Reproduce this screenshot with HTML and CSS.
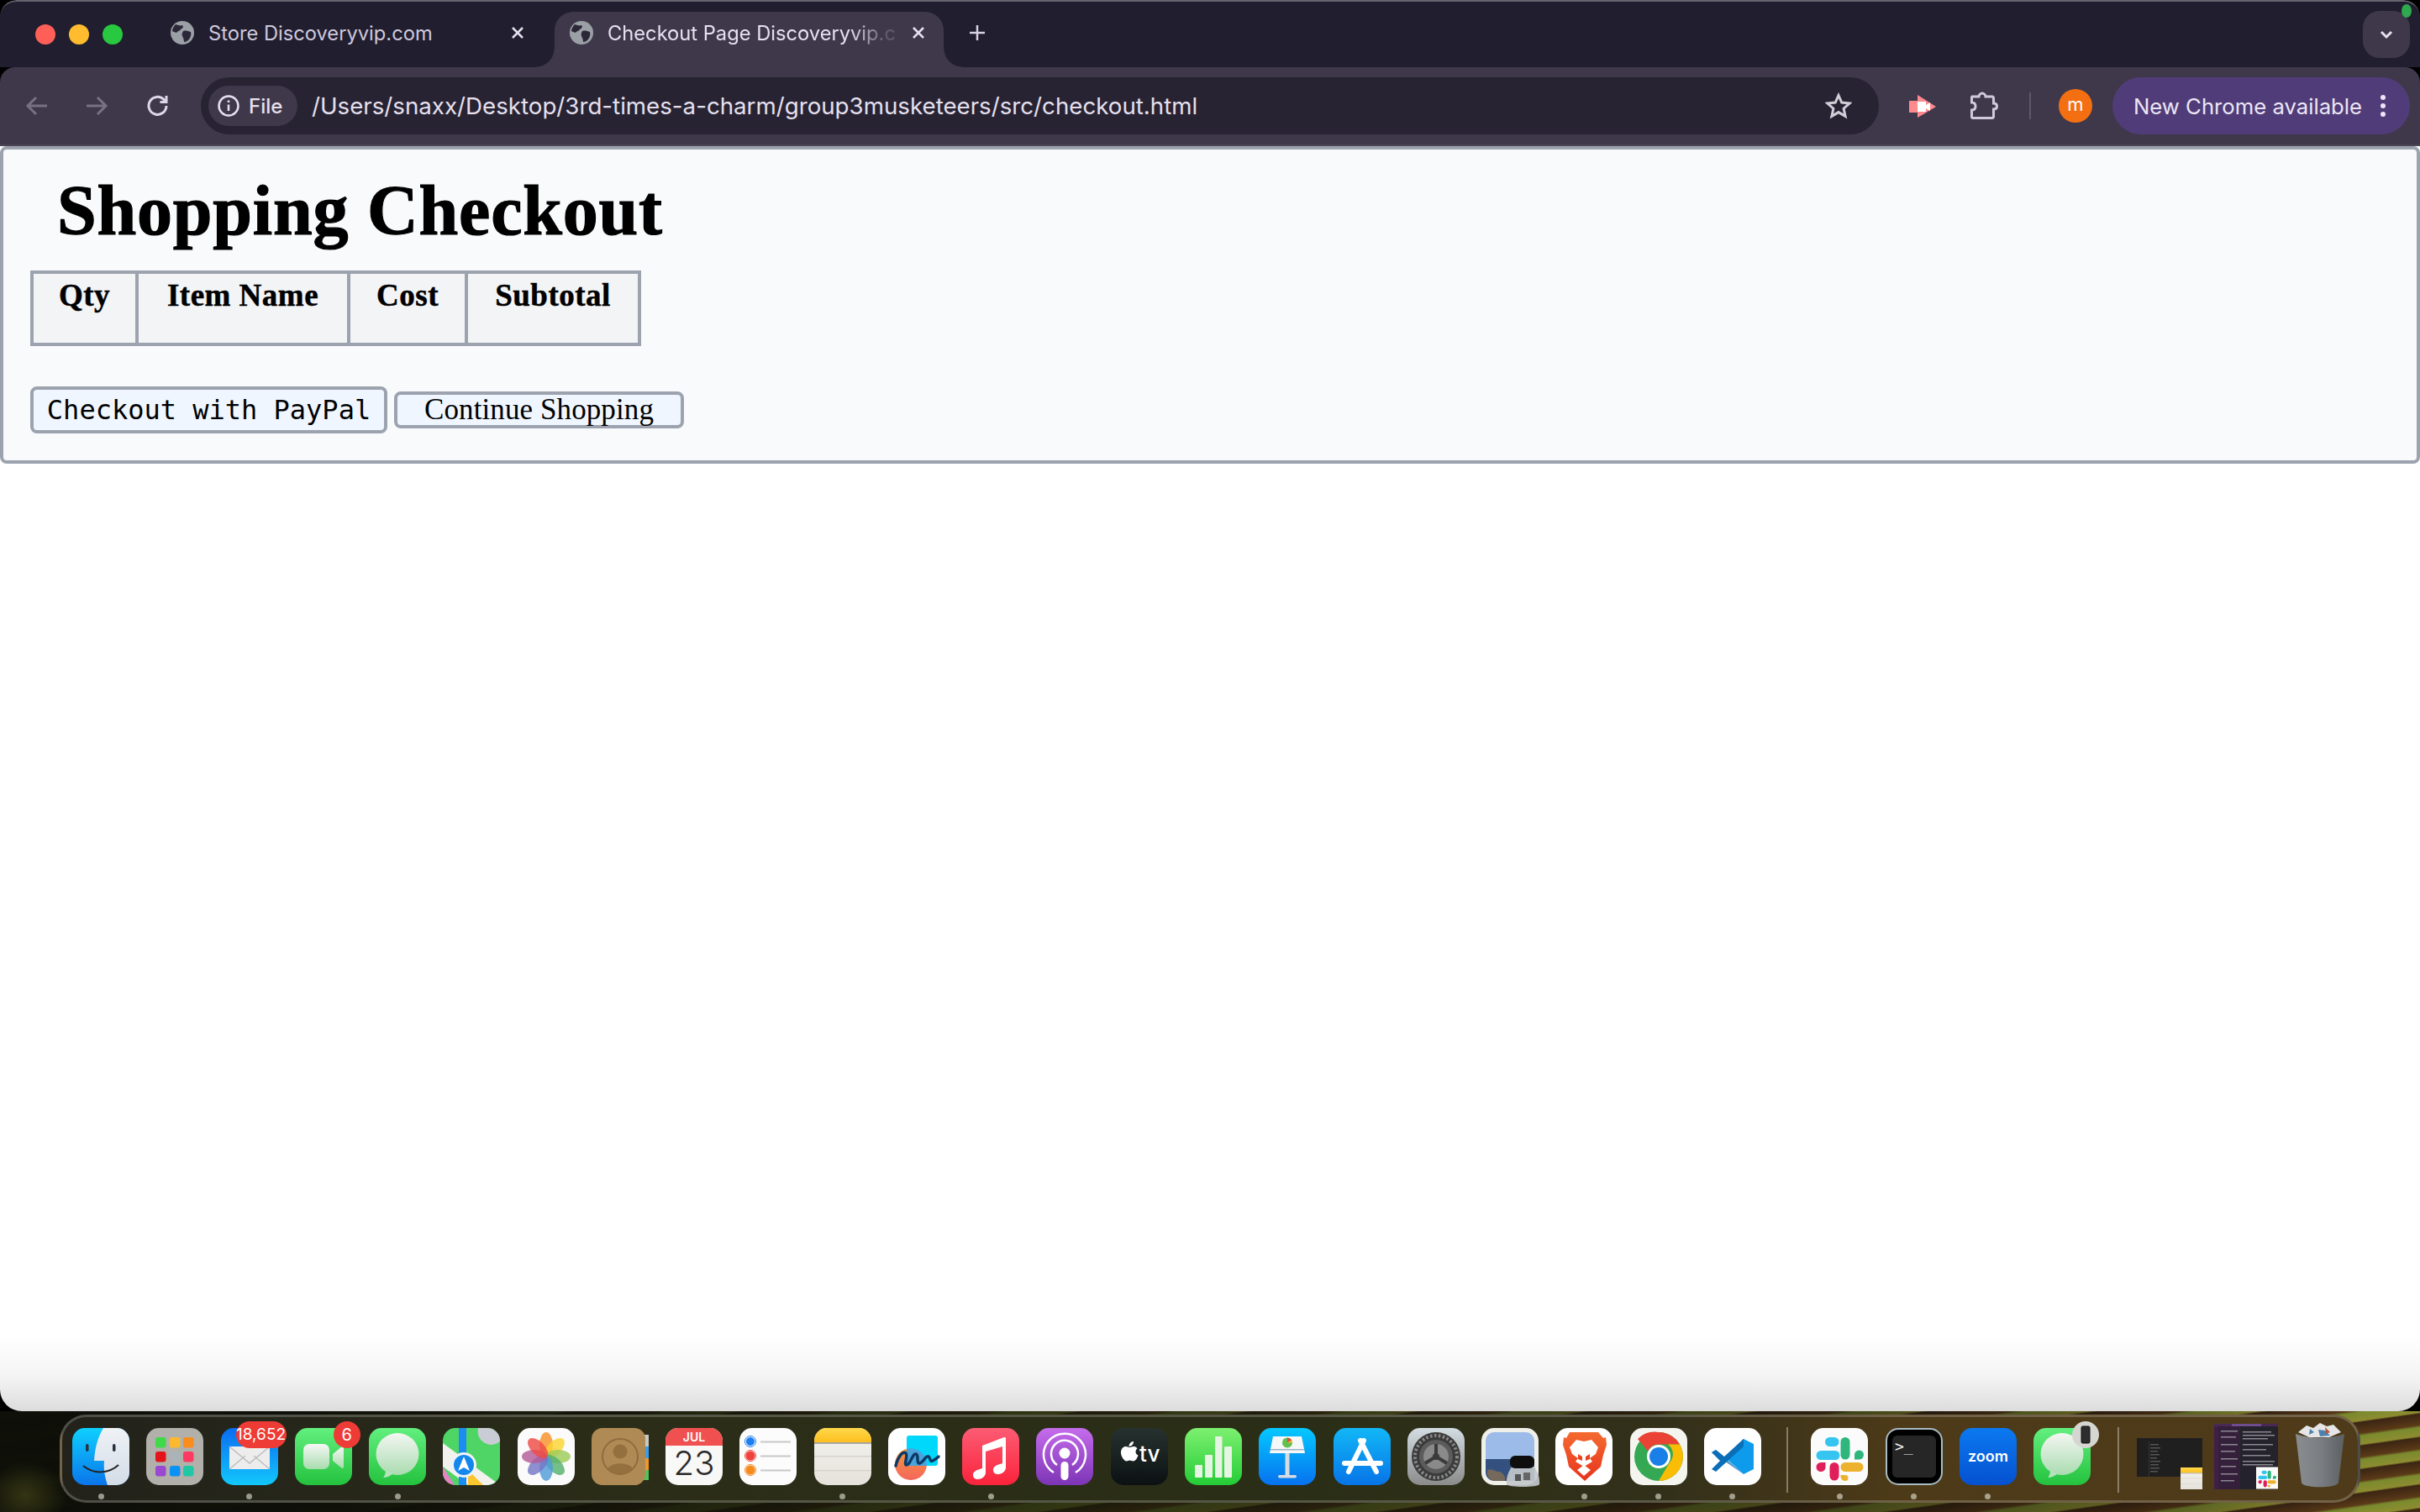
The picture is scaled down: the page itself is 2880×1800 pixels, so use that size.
FILE: index.html
```html
<!DOCTYPE html>
<html lang="en">
<head>
    <meta charset="UTF-8">
    <meta name="viewport" content="width=device-width, initial-scale=1.0">
    <title>Checkout Page</title>
    <link rel="stylesheet" href="styles.css">
</head>
<body>
    <!-- shared icons -->
    <svg class="defs" width="0" height="0">
        <defs>
            <symbol id="globe" viewBox="0 0 28 28">
                <circle cx="14" cy="14" r="14" fill="#9aa0a6"/>
                <path d="M6 4c3 1 6 2 8 1 2 2 0 4-2 5-1 2-4 2-5 4-2-1-4-1-5-2 0-3 2-6 4-8zM15 12c3-1 6 0 9 1 1 3 0 7-3 10-2 1-3 2-5 2 0-3-1-5-2-7-1-2 0-4 1-6z" fill="#2b2738"/>
            </symbol>
            <linearGradient id="msgBg" x1="0" y1="0" x2="0" y2="1"><stop offset="0" stop-color="#62ef7e"/><stop offset="1" stop-color="#24c23e"/></linearGradient>
            <linearGradient id="msgBubble" x1="0" y1="0" x2="0" y2="1"><stop offset="0" stop-color="#f4f6f2"/><stop offset="1" stop-color="#a9dcb0"/></linearGradient>
            <symbol id="messages" viewBox="0 0 68 68">
                <rect width="68" height="68" fill="url(#msgBg)"/>
                <ellipse cx="34" cy="31" rx="25.500" ry="25" fill="url(#msgBubble)"/>
                <path d="M20 50c0 5-2 8-3 9 4 0 9-2 12-5z" fill="#b5e2bb"/>
            </symbol>
            <symbol id="slack" viewBox="0 0 68 68">
                <rect width="68" height="68" fill="#fbfbfb"/>
                <path d="M28 11a5.500 5.500 0 0 1 0 11h-5.500a5.500 5.500 0 0 1 0-11z M29 27a5.500 5.500 0 0 1 0 11H12a5.500 5.500 0 0 1 0-11z" fill="#36c5f0"/>
                <path d="M41 11a5.500 5.500 0 0 1 5.500 5.500V32a5.500 5.500 0 0 1-11 0V16.500A5.500 5.500 0 0 1 41 11z M63 32a5.500 5.500 0 0 1-5.500 5.500H52V32a5.500 5.500 0 0 1 11 0z" fill="#2eb67d"/>
                <path d="M57 41a5.500 5.500 0 0 1 0 11H41a5.500 5.500 0 0 1 0-11z M41 63a5.500 5.500 0 0 1-5.500-5.500V56H41a3.500 3.500 0 0 1 0 7z" fill="#ecb22e"/>
                <path d="M12 52a5.500 5.500 0 0 1-5.500-5.500A5.500 5.500 0 0 1 12 41h5.500v5.500A5.500 5.500 0 0 1 12 52z M28 41a5.500 5.500 0 0 1 5.500 5.500V57a5.500 5.500 0 0 1-11 0V46.500A5.500 5.500 0 0 1 28 41z" fill="#e01e5a"/>
            </symbol>
            <linearGradient id="notesTop" x1="0" y1="0" x2="0" y2="1"><stop offset="0" stop-color="#ffd84a"/><stop offset="1" stop-color="#fcbf1f"/></linearGradient>
            <linearGradient id="notesBody" x1="0" y1="0" x2="0" y2="1"><stop offset="0" stop-color="#f4f3ee"/><stop offset="1" stop-color="#e5e2db"/></linearGradient>
            <symbol id="notes" viewBox="0 0 68 68">
                <rect width="68" height="68" fill="url(#notesBody)"/>
                <rect width="68" height="17" fill="url(#notesTop)"/>
                <rect y="17" width="68" height="2" fill="#a9a79f"/>
                <rect y="33" width="68" height="1.500" fill="#d5d3cc"/>
                <rect y="50" width="68" height="1.500" fill="#d5d3cc"/>
            </symbol>
        </defs>
    </svg>

    <div class="window">
        <div class="tabstrip">
            <div class="lights">
                <span class="light red"></span>
                <span class="light yellow"></span>
                <span class="light green"></span>
            </div>
            <div class="tab">
                <svg class="favicon"><use href="#globe"/></svg>
                <span class="tab-title">Store Discoveryvip.com</span>
                <svg class="tab-close" viewBox="0 0 20 20"><path d="M4 4l12 12M16 4L4 16"/></svg>
            </div>
            <div class="tab tab-active">
                <svg class="favicon"><use href="#globe"/></svg>
                <span class="tab-title tab-fade">Checkout Page Discoveryvip.c</span>
                <svg class="tab-close" viewBox="0 0 20 20"><path d="M4 4l12 12M16 4L4 16"/></svg>
            </div>
            <svg class="new-tab" viewBox="0 0 24 24"><path d="M12 3v18M3 12h18"/></svg>
            <div class="tab-search">
                <svg viewBox="0 0 20 20"><path d="M4 7l6 6 6-6"/></svg>
                <span class="update-dot"></span>
            </div>
        </div>

        <div class="toolbar">
            <svg class="nav-icon nav-off" viewBox="0 0 36 36"><path d="M30 18H7M17 8L7 18l10 10"/></svg>
            <svg class="nav-icon nav-off" viewBox="0 0 36 36"><path d="M6 18h23M19 8l10 10-10 10"/></svg>
            <svg class="nav-icon nav-reload" viewBox="0 0 36 36"><path d="M28 18a10.500 10.500 0 1 1-3-7.500l3 3M28 6v7.500h-7.500"/></svg>
            <div class="omnibox">
                <div class="site-chip">
                    <svg class="info-icon" viewBox="0 0 28 28">
                        <circle cx="14" cy="14" r="11.500"/>
                        <path d="M14 12.500V20M14 7.500v2.500"/>
                    </svg>
                    <span>File</span>
                </div>
                <span class="url">/Users/snaxx/Desktop/3rd-times-a-charm/group3musketeers/src/checkout.html</span>
                <svg class="star" viewBox="0 0 32 32"><path d="M16 3.500l3.800 8.600 9.300.9-7 6.200 2 9.200-8.100-4.800-8.100 4.800 2-9.200-7-6.200 9.300-.9z"/></svg>
            </div>
            <svg class="ext-video" viewBox="0 0 36 28">
                <rect x="2" y="8" width="12" height="14" fill="#ff8a8e"/>
                <path d="M12 1l22 14-22 13z" fill="#ff8a8e"/>
                <path d="M12 9h10v12H12zM22 13l5-3v10l-5-3z" fill="#fff"/>
            </svg>
            <svg class="ext-puzzle" viewBox="0 0 36 36"><path d="M4 7h8c0-2 2-4 4-4s4 2 4 4h8a1.500 1.500 0 0 1 1.500 1.500V15c2 0 4 1 4 3.500S31.500 22 29.500 22v9a1.500 1.500 0 0 1-1.500 1.500H5A1.500 1.500 0 0 1 3.500 31v-8c3 0 4.500-2 4.500-4.500S6.500 14 3.500 14V8.500A1.500 1.500 0 0 1 4 7z"/></svg>
            <span class="tool-sep"></span>
            <span class="avatar">m</span>
            <div class="update-chip">
                <span>New Chrome available</span>
                <svg class="chip-dots" viewBox="0 0 6 28"><circle cx="3" cy="4" r="3"/><circle cx="3" cy="14" r="3"/><circle cx="3" cy="24" r="3"/></svg>
            </div>
        </div>

        <div class="viewport">
            <div class="checkout">
                <h1>Shopping Checkout</h1>
                <table class="cart">
                    <thead>
                        <tr>
                            <th class="col-qty">Qty</th>
                            <th class="col-name">Item Name</th>
                            <th class="col-cost">Cost</th>
                            <th class="col-sub">Subtotal</th>
                        </tr>
                    </thead>
                </table>
                <div class="actions">
                    <button class="btn-paypal">Checkout with PayPal</button>
                    <button class="btn-continue">Continue Shopping</button>
                </div>
            </div>
        </div>
    </div>

    <div class="desktop">
        <div class="dock">
            <div class="app">
                <svg class="icon" viewBox="0 0 68 68">
                    <defs><linearGradient id="fin" x1="0" y1="0" x2="0" y2="1"><stop offset="0" stop-color="#0fd0ff"/><stop offset="1" stop-color="#0a75ea"/></linearGradient>
                    <linearGradient id="fin2" x1="0" y1="0" x2="0" y2="1"><stop offset="0" stop-color="#eff2f6"/><stop offset="1" stop-color="#d3dce7"/></linearGradient></defs>
                    <rect width="68" height="68" fill="url(#fin)"/>
                    <path d="M37 0c-7 12-10 24-11 39h12c-1 10 1 20 4 29h26V0z" fill="url(#fin2)"/>
                    <rect x="16" y="19" width="3.500" height="9" rx="1.700" fill="#27333f"/>
                    <rect x="48" y="19" width="3.500" height="9" rx="1.700" fill="#27333f"/>
                    <path d="M13 45c12 10 30 10 42-1" fill="none" stroke="#222" stroke-width="2"/>
                </svg>
                <span class="dot on"></span>
            </div>
            <div class="app">
                <svg class="icon" viewBox="0 0 68 68">
                    <rect width="68" height="68" fill="#b1b0ab"/>
                    <g>
                        <rect x="11" y="11" width="12.500" height="12.500" rx="3" fill="#3fd94a"/>
                        <rect x="28" y="11" width="12.500" height="12.500" rx="3" fill="#fdb92d"/>
                        <rect x="44" y="11" width="12.500" height="12.500" rx="3" fill="#f98c1b"/>
                        <rect x="11" y="28" width="12.500" height="12.500" rx="3" fill="#e3151a"/>
                        <rect x="28" y="28" width="12.500" height="12.500" rx="3" fill="#a9b3b8"/>
                        <rect x="44" y="28" width="12.500" height="12.500" rx="3" fill="#fb3b63"/>
                        <rect x="11" y="45" width="12.500" height="12.500" rx="3" fill="#9a48d0"/>
                        <rect x="28" y="45" width="12.500" height="12.500" rx="3" fill="#0a91f5"/>
                        <rect x="44" y="45" width="12.500" height="12.500" rx="3" fill="#1fc7a5"/>
                    </g>
                </svg>
                <span class="dot"></span>
            </div>
            <div class="app">
                <svg class="icon" viewBox="0 0 68 68">
                    <defs><linearGradient id="mail" x1="0" y1="0" x2="0" y2="1"><stop offset="0" stop-color="#0a6cf0"/><stop offset="1" stop-color="#12c8fc"/></linearGradient></defs>
                    <rect width="68" height="68" fill="url(#mail)"/>
                    <rect x="10" y="22" width="48" height="27" rx="2" fill="#ededed"/>
                    <path d="M10 49l19-16M58 49L39 33M10 22l24 20 24-20" fill="none" stroke="#bdbdbd" stroke-width="1.500"/>
                </svg>
                <span class="badge badge-mail">18,652</span>
                <span class="dot on"></span>
            </div>
            <div class="app">
                <svg class="icon" viewBox="0 0 68 68">
                    <defs><linearGradient id="ftg" x1="0" y1="0" x2="0" y2="1"><stop offset="0" stop-color="#f6f7f5"/><stop offset="1" stop-color="#a8dcae"/></linearGradient></defs>
                    <rect width="68" height="68" fill="url(#msgBg)"/>
                    <rect x="10" y="19" width="31" height="30" rx="7" fill="url(#ftg)"/>
                    <path d="M45 31l11-9c1 0 2 1 2 2v22c0 1-1 2-2 2l-11-9z" fill="url(#ftg)"/>
                </svg>
                <span class="badge badge-count">6</span>
                <span class="dot"></span>
            </div>
            <div class="app">
                <svg class="icon"><use href="#messages"/></svg>
                <span class="dot on"></span>
            </div>
            <div class="app">
                <svg class="icon" viewBox="0 0 68 68">
                    <rect width="68" height="68" fill="#4fd566"/>
                    <path d="M0 18L68 68H30L0 46z" fill="#f1f1ee"/>
                    <path d="M0 46l14 22H0z" fill="#e583c5"/>
                    <path d="M30 50l18 18H30z" fill="#fdc52e"/>
                    <rect x="19" width="9" height="68" fill="#1d8cf2"/>
                    <path d="M42 0a16 16 0 0 0 26 16V0z" fill="#c9ccd4"/>
                    <circle cx="25" cy="44" r="15" fill="#f0f3f7"/>
                    <circle cx="25" cy="44" r="12" fill="#1487ee"/>
                    <path d="M25 34l7 17-7-4-7 4z" fill="#fff"/>
                </svg>
                <span class="dot"></span>
            </div>
            <div class="app">
                <svg class="icon" viewBox="0 0 68 68">
                    <rect width="68" height="68" fill="#fbfbfb"/>
                    <g transform="translate(34 34)" fill-opacity=".82">
                        <ellipse cy="-14" rx="8" ry="15" fill="#f8912a"/>
                        <ellipse cy="-14" rx="8" ry="15" fill="#fbd332" transform="rotate(45)"/>
                        <ellipse cy="-14" rx="8" ry="15" fill="#9ccb57" transform="rotate(90)"/>
                        <ellipse cy="-14" rx="8" ry="15" fill="#55b06c" transform="rotate(135)"/>
                        <ellipse cy="-14" rx="8" ry="15" fill="#4f9bd8" transform="rotate(180)"/>
                        <ellipse cy="-14" rx="8" ry="15" fill="#7476c6" transform="rotate(225)"/>
                        <ellipse cy="-14" rx="8" ry="15" fill="#b35c9a" transform="rotate(270)"/>
                        <ellipse cy="-14" rx="8" ry="15" fill="#ee4a45" transform="rotate(315)"/>
                    </g>
                </svg>
                <span class="dot"></span>
            </div>
            <div class="app">
                <svg class="icon icon-square" viewBox="0 0 68 68">
                    <rect x="58" y="8" width="10" height="14" fill="#c9c8c2"/>
                    <rect x="58" y="22" width="10" height="14" fill="#3d9de9"/>
                    <rect x="58" y="36" width="10" height="14" fill="#f0962a"/>
                    <rect x="58" y="50" width="10" height="12" fill="#54c15c"/>
                    <rect width="64" height="68" rx="13" fill="#b08a55"/>
                    <circle cx="34" cy="34" r="21" fill="none" stroke="#8e6c3f" stroke-width="2"/>
                    <circle cx="34" cy="28" r="8.500" fill="#94703f"/>
                    <path d="M19 49c3-9 27-9 30 0-8 8-22 8-30 0z" fill="#94703f"/>
                </svg>
                <span class="dot"></span>
            </div>
            <div class="app">
                <svg class="icon" viewBox="0 0 68 68">
                    <rect width="68" height="68" fill="#f8f8f6"/>
                    <rect width="68" height="21" fill="#f0504f"/>
                    <text x="34" y="16" class="cal-month">JUL</text>
                    <text x="34" y="56" class="cal-day">23</text>
                </svg>
                <span class="dot"></span>
            </div>
            <div class="app">
                <svg class="icon" viewBox="0 0 68 68">
                    <rect width="68" height="68" fill="#fcfcfc"/>
                    <circle cx="13" cy="16" r="5.500" fill="#1c7ff0" stroke="#fcfcfc"/><circle cx="13" cy="16" r="6.500" fill="none" stroke="#1c7ff0"/>
                    <circle cx="13" cy="33" r="5.500" fill="#f0423c"/><circle cx="13" cy="33" r="6.500" fill="none" stroke="#f0423c"/>
                    <circle cx="13" cy="50" r="5.500" fill="#f58a1f"/><circle cx="13" cy="50" r="6.500" fill="none" stroke="#f58a1f"/>
                    <path d="M25 16.500h36M25 33.500h36M25 50.500h36" stroke="#c8c8c8" stroke-width="2"/>
                </svg>
                <span class="dot"></span>
            </div>
            <div class="app">
                <svg class="icon"><use href="#notes"/></svg>
                <span class="dot on"></span>
            </div>
            <div class="app">
                <svg class="icon" viewBox="0 0 68 68">
                    <defs><linearGradient id="ff" x1="0" y1="0" x2="0" y2="1"><stop offset="0" stop-color="#f59a3c"/><stop offset="1" stop-color="#f4665c"/></linearGradient></defs>
                    <rect width="68" height="68" fill="#fff"/>
                    <circle cx="27" cy="43" r="19" fill="url(#ff)"/>
                    <rect x="22" y="9" width="37" height="36" rx="3" fill="#00d8fb"/>
                    <path d="M22 25a19 19 0 0 1 24 20H25a3 3 0 0 1-3-3z" fill="#4ba3dc"/>
                    <path d="M9 45c3-12 9-18 12-15 3 3-3 14 1 14s7-14 11-13 0 11 4 11 8-10 11-8 1 7 5 5 5-3 7-5" fill="none" stroke="#0c3a66" stroke-width="3.500" stroke-linecap="round"/>
                </svg>
                <span class="dot"></span>
            </div>
            <div class="app">
                <svg class="icon" viewBox="0 0 68 68">
                    <defs><linearGradient id="mus" x1="0" y1="0" x2="0" y2="1"><stop offset="0" stop-color="#fc5c74"/><stop offset="1" stop-color="#fa233b"/></linearGradient></defs>
                    <rect width="68" height="68" fill="url(#mus)"/>
                    <path d="M24 21l26-10c1 0 2 0 2 2v34c0 4-4 8-9 8-4 0-6-2-6-5 0-4 4-6 8-7l3-1V22l-20 6v25c0 4-4 8-9 8-4 0-6-2-6-5 0-4 4-6 8-7l3-1z" fill="#fff"/>
                </svg>
                <span class="dot on"></span>
            </div>
            <div class="app">
                <svg class="icon" viewBox="0 0 68 68">
                    <defs><linearGradient id="pod" x1="0" y1="0" x2="0" y2="1"><stop offset="0" stop-color="#c56cec"/><stop offset="1" stop-color="#7c35b5"/></linearGradient></defs>
                    <rect width="68" height="68" fill="url(#pod)"/>
                    <path d="M21 53a25 25 0 1 1 26 0M25 44a16 16 0 1 1 18 0" fill="none" stroke="#fff" stroke-width="2.500"/>
                    <circle cx="34" cy="30" r="6.500" fill="#fff"/>
                    <rect x="29.500" y="40" width="9" height="22" rx="4.500" fill="#fff"/>
                </svg>
                <span class="dot"></span>
            </div>
            <div class="app">
                <svg class="icon" viewBox="0 0 68 68">
                    <defs><linearGradient id="tv" x1="0" y1="0" x2="0" y2="1"><stop offset="0" stop-color="#26322f"/><stop offset="1" stop-color="#0c1113"/></linearGradient></defs>
                    <rect width="68" height="68" fill="url(#tv)"/>
                    <path d="M22 23c2 0 4-1.500 6-1 2 .5 3 1.500 3.500 2.500-3 2-2.500 6.500 1 8-1 3-3 7-6 7-1.500 0-2.500-1-4-1s-2.500 1-4 1c-3 0-7-7-6.500-11 .5-5 3.500-6.500 6-6.500 1.500 0 2.500 1 4 1zM21.500 22c0-3 2.500-6 5.500-6 .3 3-2.500 6-5.500 6z" fill="#fff"/>
                    <text x="34" y="40" class="tv-label">tv</text>
                </svg>
                <span class="dot"></span>
            </div>
            <div class="app">
                <svg class="icon" viewBox="0 0 68 68">
                    <defs><linearGradient id="num" x1="0" y1="0" x2="0" y2="1"><stop offset="0" stop-color="#7df070"/><stop offset="1" stop-color="#24cc36"/></linearGradient></defs>
                    <rect width="68" height="68" fill="url(#num)"/>
                    <g fill="#e6f4e4">
                        <rect x="12" y="44" width="9" height="15" rx="1"/>
                        <rect x="24" y="32" width="9" height="27" rx="1"/>
                        <rect x="36" y="10" width="8.500" height="49" rx="1"/>
                        <rect x="47" y="22" width="9" height="37" rx="1"/>
                    </g>
                </svg>
                <span class="dot"></span>
            </div>
            <div class="app">
                <svg class="icon" viewBox="0 0 68 68">
                    <defs><linearGradient id="key" x1="0" y1="0" x2="0" y2="1"><stop offset="0" stop-color="#05c8ff"/><stop offset="1" stop-color="#0672ef"/></linearGradient></defs>
                    <rect width="68" height="68" fill="url(#key)"/>
                    <rect x="31.500" y="30" width="5" height="28" fill="#d6dce2"/>
                    <rect x="23" y="56" width="22" height="3.500" rx="1.700" fill="#d6dce2"/>
                    <path d="M17 10h34l4 20H13z" fill="#f5f7f9"/>
                    <rect x="14" y="25" width="40" height="1.500" fill="#9fb2c2"/>
                    <circle cx="34" cy="17.500" r="6" fill="#62c04f"/>
                    <path d="M34 17.500v-6a6 6 0 0 1 5 3z" fill="#e8483f"/>
                    <path d="M34 17.500l5-3a6 6 0 0 1 1 3z" fill="#f7b731"/>
                </svg>
                <span class="dot"></span>
            </div>
            <div class="app">
                <svg class="icon" viewBox="0 0 68 68">
                    <defs><linearGradient id="aps" x1="0" y1="0" x2="0" y2="1"><stop offset="0" stop-color="#12b7f6"/><stop offset="1" stop-color="#0774e8"/></linearGradient></defs>
                    <rect width="68" height="68" fill="url(#aps)"/>
                    <path d="M36 15L18 52M32 15l19 37M13 42h43" fill="none" stroke="#fff" stroke-width="6" stroke-linecap="round"/>
                </svg>
                <span class="dot"></span>
            </div>
            <div class="app">
                <svg class="icon" viewBox="0 0 68 68">
                    <defs><linearGradient id="set" x1="0" y1="0" x2="0" y2="1"><stop offset="0" stop-color="#d3dde2"/><stop offset="1" stop-color="#8b8b8b"/></linearGradient></defs>
                    <rect width="68" height="68" fill="url(#set)"/>
                    <circle cx="34" cy="34" r="29" fill="#3b3b3b"/>
                    <circle cx="34" cy="34" r="25" fill="none" stroke="#888" stroke-width="4" stroke-dasharray="2.500 2.500"/>
                    <circle cx="34" cy="34" r="20" fill="#5c5c5c"/>
                    <circle cx="34" cy="34" r="15" fill="#8a8a8a"/>
                    <path d="M34 34V19M34 34l13 8M34 34l-13 8" stroke="#3b3b3b" stroke-width="4"/>
                    <circle cx="34" cy="34" r="4" fill="#3b3b3b"/>
                </svg>
                <span class="dot"></span>
            </div>
            <div class="app">
                <svg class="icon icon-open" viewBox="0 0 68 68">
                    <rect width="68" height="68" rx="15" fill="#f0f0ea"/>
                    <path d="M15 5h38a10 10 0 0 1 10 10v22H5V15A10 10 0 0 1 15 5z" fill="#9dbbe8"/>
                    <path d="M5 37h58v26H15A10 10 0 0 1 5 53z" fill="#34507e"/>
                    <path d="M7 50c4-2 8 0 11 2 4-1 8 2 10 6v5H15a10 10 0 0 1-8-8z" fill="#75695c"/>
                    <path d="M36 46c-3 5-7 12-6 21 1 4 38 4 39 0 1-9-3-16-6-21z" fill="#c3c8cb" fill-opacity=".92"/>
                    <rect x="34" y="33" width="29" height="15" rx="6" fill="#0e0e0e"/>
                    <rect x="40" y="55" width="7" height="8" fill="#555"/>
                    <rect x="50" y="53" width="8" height="9" fill="#666"/>
                </svg>
                <span class="dot"></span>
            </div>
            <div class="app">
                <svg class="icon" viewBox="0 0 68 68">
                    <defs><linearGradient id="brv" x1="0" y1="0" x2="0" y2="1"><stop offset="0" stop-color="#f46a2f"/><stop offset="1" stop-color="#e8331e"/></linearGradient></defs>
                    <rect width="68" height="68" fill="#fff"/>
                    <path d="M17 5h34l6 7 3-1 1 9-4 12-3 14-19 17-19-17-3-14-4-12 1-9 3 1z" fill="url(#brv)"/>
                    <path d="M34 16l-9-2-8 9 3 8 7 5-3 4 10 6 10-6-3-4 7-5 3-8-8-9z" fill="#fff"/>
                    <path d="M27 31l5 3v5l-5-2zM41 31l-5 3v5l5-2z" fill="#e8431f"/>
                    <path d="M34 44l8 6-8 7-8-7z" fill="#fff"/>
                </svg>
                <span class="dot on"></span>
            </div>
            <div class="app">
                <svg class="icon" viewBox="0 0 68 68">
                    <rect width="68" height="68" fill="#f5f5f0"/>
                    <circle cx="34" cy="34" r="29" fill="#34a853"/>
                    <path d="M34 5a29 29 0 0 1 25 14.500H34a14.500 14.500 0 0 0-13 8L9 13A29 29 0 0 1 34 5z" fill="#ea4335"/>
                    <path d="M59 19.500A29 29 0 0 1 34 63l13-22a14.500 14.500 0 0 0-2-21.500z" fill="#fbbc04"/>
                    <circle cx="34" cy="34" r="14" fill="#fff"/>
                    <circle cx="34" cy="34" r="11" fill="#1a80e8"/>
                </svg>
                <span class="dot on"></span>
            </div>
            <div class="app">
                <svg class="icon" viewBox="0 0 68 68">
                    <rect width="68" height="68" fill="#fff"/>
                    <path d="M47 13l12 6v30l-12 6L25 35z" fill="#0e9bec"/>
                    <path d="M47 13L24 34l-10-8-5 3 10 10-10 10 5 3 33-30z" fill="#0a6fb8"/>
                    <path d="M47 55L14 26l-5 3 38 26z" fill="#0a6fb8" fill-opacity=".7"/>
                </svg>
                <span class="dot on"></span>
            </div>

            <span class="dock-sep sep-apps"></span>

            <div class="app">
                <svg class="icon"><use href="#slack"/></svg>
                <span class="dot on"></span>
            </div>
            <div class="app">
                <svg class="icon" viewBox="0 0 68 68">
                    <rect width="68" height="68" fill="#a9bcc4"/>
                    <rect x="2" y="2" width="64" height="64" rx="13" fill="#000"/>
                    <rect x="8" y="9" width="52" height="50" rx="6" fill="#262626"/>
                    <text x="11" y="28" class="term-prompt">&gt;_</text>
                </svg>
                <span class="dot on"></span>
            </div>
            <div class="app">
                <svg class="icon" viewBox="0 0 68 68">
                    <defs><linearGradient id="zm" x1="0" y1="0" x2="0" y2="1"><stop offset="0" stop-color="#0b79f0"/><stop offset="1" stop-color="#0551d0"/></linearGradient></defs>
                    <rect width="68" height="68" fill="url(#zm)"/>
                    <text x="34" y="40" class="zoom-word">zoom</text>
                </svg>
                <span class="dot on"></span>
            </div>
            <div class="app">
                <svg class="icon"><use href="#messages"/></svg>
                <span class="badge badge-phone">
                    <svg viewBox="0 0 14 24"><rect x="2" y="2" width="10" height="20" rx="1.500" fill="#2d2d2d" stroke="#111"/></svg>
                </span>
                <span class="dot"></span>
            </div>

            <span class="dock-sep sep-stack"></span>

            <svg class="thumb thumb-notes" viewBox="0 0 78 78">
                <rect y="17" width="78" height="46" fill="#1f1f20"/>
                <rect x="14" y="21" width="1" height="42" fill="#333"/>
                <g fill="#555"><rect x="16" y="24" width="10" height="1.500"/><rect x="16" y="28" width="12" height="1.500"/><rect x="16" y="32" width="9" height="1.500"/><rect x="16" y="36" width="11" height="1.500"/><rect x="16" y="40" width="8" height="1.500"/><rect x="16" y="44" width="12" height="1.500"/><rect x="16" y="48" width="10" height="1.500"/><rect x="16" y="52" width="11" height="1.500"/><rect x="16" y="56" width="9" height="1.500"/></g>
                <svg x="52" y="52" width="26" height="26"><use href="#notes"/></svg>
            </svg>
            <svg class="thumb thumb-slack" viewBox="0 0 76 78">
                <rect width="76" height="78" fill="#24222a"/>
                <rect width="5" height="78" fill="#3f1f48"/>
                <rect x="5" width="26" height="78" fill="#35203b"/>
                <rect width="76" height="3" fill="#4a2a55"/>
                <rect x="21" y="0.500" width="35" height="2" fill="#7d5ba6"/>
                <g fill="#8b8791">
                    <rect x="8" y="8" width="20" height="1.500"/><rect x="8" y="15" width="18" height="1.500"/><rect x="8" y="24" width="20" height="1.500"/><rect x="8" y="32" width="17" height="1.500"/><rect x="8" y="41" width="20" height="1.500"/><rect x="8" y="50" width="18" height="1.500"/><rect x="8" y="59" width="20" height="1.500"/><rect x="8" y="67" width="16" height="1.500"/>
                    <rect x="34" y="9" width="34" height="1.500"/><rect x="34" y="13" width="38" height="1.500"/><rect x="34" y="17" width="30" height="1.500"/><rect x="34" y="24" width="36" height="1.500"/><rect x="34" y="30" width="28" height="1.500"/><rect x="34" y="37" width="33" height="1.500"/><rect x="34" y="44" width="38" height="1.500"/><rect x="34" y="48" width="36" height="1.500"/>
                </g>
                <svg x="50" y="51" width="26" height="27"><use href="#slack"/></svg>
            </svg>
            <svg class="thumb thumb-trash" viewBox="0 0 60 80">
                <defs><linearGradient id="bin" x1="0" y1="0" x2="1" y2="0"><stop offset="0" stop-color="#8a8d90"/><stop offset=".5" stop-color="#7b7e82"/><stop offset="1" stop-color="#5d6063"/></linearGradient></defs>
                <path d="M1 14c15 6 43 6 58 0l-7 58c-1 7-43 7-44 0z" fill="url(#bin)"/>
                <path d="M4 12l10-8 8 3 8-6 8 4 8-2 9 9-14 6-24 0z" fill="#e6e6e6"/>
                <path d="M28 9l8 1 6 6-12 1zM18 8l5 4-6 3z" fill="#4c82b0"/>
                <path d="M36 6l6 6-5 2z" fill="#b5573f"/>
            </svg>
        </div>
    </div>
</body>
</html>
```

FILE: styles.css
```css
* {
    box-sizing: border-box;
}

html,
body {
    margin: 0;
    padding: 0;
}

body {
    width: 2880px;
    height: 1800px;
    overflow: hidden;
    background-color: #000;
    font-family: "Inter", "Liberation Sans", sans-serif;
    display: flex;
    flex-direction: column;
}

.defs {
    position: absolute;
}

/* browser window */

.window {
    height: 1680px;
    display: flex;
    flex-direction: column;
    flex: none;
    border-radius: 20px 20px 26px 26px;
    overflow: hidden;
}

.tabstrip {
    height: 80px;
    background-color: #211e2f;
    border-top: 2px solid #66636e;
    border-radius: 20px 20px 0 0;
    display: flex;
    align-items: center;
    flex: none;
}

.lights {
    display: flex;
    gap: 16px;
    margin-left: 42px;
    margin-right: 39px;
}

.light {
    width: 24px;
    height: 24px;
    border-radius: 50%;
}

.red { background-color: #ff5f57; }
.yellow { background-color: #febc2e; }
.green { background-color: #28c840; }

.tab {
    width: 455px;
    height: 66px;
    align-self: flex-end;
    padding: 0 14px 16px 18px;
    display: flex;
    align-items: center;
    gap: 17px;
    color: #cfc8dc;
    font-size: 23.7px;
    position: relative;
}

.tab-active {
    width: 463px;
    margin-left: 20px;
    padding-right: 21px;
    background-color: #3f384b;
    border-radius: 22px 22px 0 0;
    color: #e6e0ee;
}

.tab-active::before,
.tab-active::after {
    content: "";
    position: absolute;
    bottom: 0;
    width: 22px;
    height: 22px;
}

.tab-active::before {
    left: -22px;
    background: radial-gradient(circle at 0 0, transparent 21px, #3f384b 22px);
}

.tab-active::after {
    right: -22px;
    background: radial-gradient(circle at 100% 0, transparent 21px, #3f384b 22px);
}

.favicon {
    width: 28px;
    height: 28px;
    flex: none;
}

.tab-title {
    flex: 1;
    white-space: nowrap;
}

.tab-fade {
    -webkit-mask-image: linear-gradient(90deg, #000 84%, rgba(0, 0, 0, 0.2) 96%);
    mask-image: linear-gradient(90deg, #000 84%, rgba(0, 0, 0, 0.2) 96%);
}

.tab-close {
    width: 20px;
    height: 20px;
    flex: none;
    fill: none;
    stroke: #e6e0ee;
    stroke-width: 2.5;
}

.new-tab {
    width: 24px;
    height: 24px;
    margin-left: 28px;
    margin-top: -4px;
    fill: none;
    stroke: #d6d0e0;
    stroke-width: 2.5;
}

.tab-search {
    width: 56px;
    height: 56px;
    margin-left: auto;
    margin-right: 12px;
    background-color: #3f384b;
    border-radius: 20px;
    display: flex;
    align-items: center;
    justify-content: center;
    position: relative;
}

.tab-search svg {
    width: 20px;
    height: 20px;
    fill: none;
    stroke: #e6e0ee;
    stroke-width: 3;
}

.update-dot {
    position: absolute;
    top: -8px;
    right: -2px;
    width: 12px;
    height: 16px;
    border-radius: 50%;
    background-color: #2fa84f;
}

.toolbar {
    height: 94px;
    flex: none;
    background-color: #3f384b;
    border-bottom: 2px solid #4b4653;
    border-radius: 18px 18px 0 0;
    display: flex;
    align-items: center;
    padding: 0 12px 0 26px;
}

.nav-icon {
    width: 36px;
    height: 36px;
    margin-right: 35px;
    flex: none;
    fill: none;
    stroke: #dcd6e6;
    stroke-width: 3;
}

.nav-off {
    stroke: #777184;
}

.nav-reload {
    margin-left: 2px;
    margin-right: 33px;
}

.omnibox {
    width: 1997px;
    height: 68px;
    background-color: #272333;
    border-radius: 34px;
    padding: 0 32px 0 9px;
    display: flex;
    align-items: center;
    flex: none;
}

.site-chip {
    width: 106px;
    height: 48px;
    background-color: #3f384b;
    border-radius: 24px;
    padding-left: 10px;
    display: flex;
    align-items: center;
    gap: 10px;
    color: #e6e0ee;
    font-size: 24px;
    font-weight: 500;
    flex: none;
}

.info-icon {
    width: 28px;
    height: 28px;
    fill: none;
    stroke: #e6e0ee;
    stroke-width: 2.5;
}

.url {
    margin-left: 17px;
    color: #e6e0ee;
    font-size: 27.7px;
    white-space: nowrap;
}

.star {
    width: 32px;
    height: 32px;
    margin-left: auto;
    fill: none;
    stroke: #d2ced8;
    stroke-width: 3;
}

.ext-video {
    width: 36px;
    height: 28px;
    margin-left: 34px;
    flex: none;
}

.ext-puzzle {
    width: 36px;
    height: 36px;
    margin-left: 37px;
    flex: none;
    fill: none;
    stroke: #cfc9dc;
    stroke-width: 3;
}

.tool-sep {
    width: 2px;
    height: 32px;
    margin-left: 36px;
    background-color: #5e5869;
    flex: none;
}

.avatar {
    width: 40px;
    height: 40px;
    margin-left: 33px;
    border-radius: 50%;
    background-color: #f36f12;
    color: #fff;
    font-size: 22px;
    text-align: center;
    line-height: 37px;
    flex: none;
}

.update-chip {
    width: 354px;
    height: 68px;
    margin-left: 24px;
    background-color: #503c78;
    border-radius: 34px;
    padding: 0 29px 0 25px;
    display: flex;
    align-items: center;
    justify-content: space-between;
    color: #ece6f6;
    font-size: 25.7px;
    flex: none;
}

.chip-dots {
    width: 6px;
    height: 28px;
    fill: #ece6f6;
}

/* page */

.viewport {
    flex: 1;
    background: linear-gradient(to top, #dcdcdc, #e8e8e8 20px, #f4f4f4 42px, #ffffff 90px);
}

.checkout {
    background-color: #f9fafb;
    border: 4px solid #9ca3af;
    border-radius: 8px;
    padding: 32px;
}

h1 {
    margin: 0 0 32px 32px;
    padding-top: 2px;
    font-family: "Liberation Serif", serif;
    font-size: 84px;
    font-weight: bold;
    letter-spacing: 0.8px;
    line-height: 78px;
    color: #000;
    -webkit-text-stroke: 1.2px #000;
}

.cart {
    border-collapse: collapse;
    background-color: #f3f4f6;
    font-family: "Liberation Serif", serif;
}

.cart th {
    height: 86px;
    border: 4px solid #9ca3af;
    padding: 5px 0 0;
    vertical-align: top;
    font-size: 37px;
    font-weight: bold;
    letter-spacing: 0.5px;
    line-height: 42px;
    text-align: center;
    color: #000;
    -webkit-text-stroke: 0.5px #000;
}

.col-qty { width: 125px; }
.col-name { width: 252px; }
.col-cost { width: 140px; }
.col-sub { width: 206px; }

.actions {
    margin-top: 48px;
    display: flex;
    align-items: center;
    gap: 8px;
}

button {
    background-color: #eff6ff;
    border: 4px solid #9ca3af;
    border-radius: 8px;
    color: #000;
    padding: 0;
}

.btn-paypal {
    width: 425px;
    height: 56px;
    font-family: "DejaVu Sans Mono", monospace;
    font-size: 32px;
}

.btn-continue {
    width: 345px;
    height: 44px;
    font-family: "Liberation Serif", serif;
    font-size: 35px;
    letter-spacing: 0.1px;
    line-height: 36px;
}

/* desktop and dock */

.desktop {
    flex: 1;
    padding: 4px 0 0 71px;
    background:
        radial-gradient(ellipse 50px 40px at 30px 100px, rgba(90, 90, 30, 0.5), rgba(0, 0, 0, 0)),
        linear-gradient(90deg, rgba(12, 14, 8, 0.98) 0, rgba(12, 14, 8, 0.97) 400px, rgba(18, 22, 8, 0.72) 1300px, rgba(14, 14, 6, 0.55) 2200px, rgba(10, 8, 4, 0.3) 2600px, rgba(0, 0, 0, 0) 2810px),
        repeating-linear-gradient(172deg, #7a8a2e 0, #8d8c30 10px, #3c2513 12px, #5a3a18 25px, #7a8a2e 28px);
}

.dock {
    width: 2738px;
    height: 105px;
    padding: 13px 0 0 12px;
    border: 3px solid rgba(255, 255, 255, 0.2);
    border-radius: 32px;
    background: linear-gradient(90deg, #22221b 0, #2b2d18 25%, #2b2e16 55%, #33301a 70%, #4d3a18 80%, #4f3b1a 100%);
    display: flex;
    gap: 20.27px;
}

.app {
    width: 68px;
    flex: none;
    display: flex;
    flex-direction: column;
    align-items: center;
    position: relative;
}

.icon {
    width: 68px;
    height: 68px;
    border-radius: 15px;
    flex: none;
    overflow: hidden;
}

.icon-square {
    border-radius: 0;
}

.icon-open {
    border-radius: 0;
    overflow: visible;
}

.dot {
    width: 7px;
    height: 7px;
    margin-top: 10px;
    border-radius: 50%;
}

.dot.on {
    background-color: rgba(232, 232, 220, 0.6);
}

.badge {
    position: absolute;
    top: -8px;
    height: 32px;
    border-radius: 16px;
    background-color: #ef3b35;
    color: #fff;
    font-size: 19px;
    line-height: 32px;
    text-align: center;
}

.badge-mail {
    left: 18px;
    width: 60px;
}

.badge-count {
    left: 46px;
    width: 32px;
    font-size: 20px;
}

.badge-phone {
    left: 46px;
    width: 32px;
    background-color: #d5d6d2;
    display: flex;
    align-items: center;
    justify-content: center;
}

.badge-phone svg {
    width: 14px;
    height: 24px;
}

.cal-month {
    font-family: "Inter", sans-serif;
    font-size: 14px;
    font-weight: 600;
    fill: #fff;
    text-anchor: middle;
}

.cal-day {
    font-family: "Inter", sans-serif;
    font-size: 40px;
    font-weight: 300;
    fill: #2a2a2a;
    text-anchor: middle;
}

.tv-label {
    font-family: "Inter", sans-serif;
    font-size: 26px;
    font-weight: 500;
    fill: #fff;
}

.term-prompt {
    font-family: "DejaVu Sans Mono", monospace;
    font-size: 18px;
    fill: #f2f2f2;
}

.zoom-word {
    font-family: "Inter", sans-serif;
    font-size: 18px;
    font-weight: 600;
    fill: #fff;
    text-anchor: middle;
}

.dock-sep {
    width: 2px;
    height: 78px;
    margin-top: -1px;
    background-color: rgba(255, 255, 255, 0.35);
    flex: none;
}

.sep-apps {
    margin-left: 10px;
    margin-right: 7px;
}

.sep-stack {
    margin-left: 12px;
}

.thumb {
    flex: none;
    height: 78px;
    margin-top: -5px;
}

.thumb-notes {
    width: 78px;
}

.thumb-slack {
    width: 76px;
    margin-left: -6px;
}

.thumb-trash {
    width: 60px;
    height: 80px;
    margin-top: -7px;
}
```
